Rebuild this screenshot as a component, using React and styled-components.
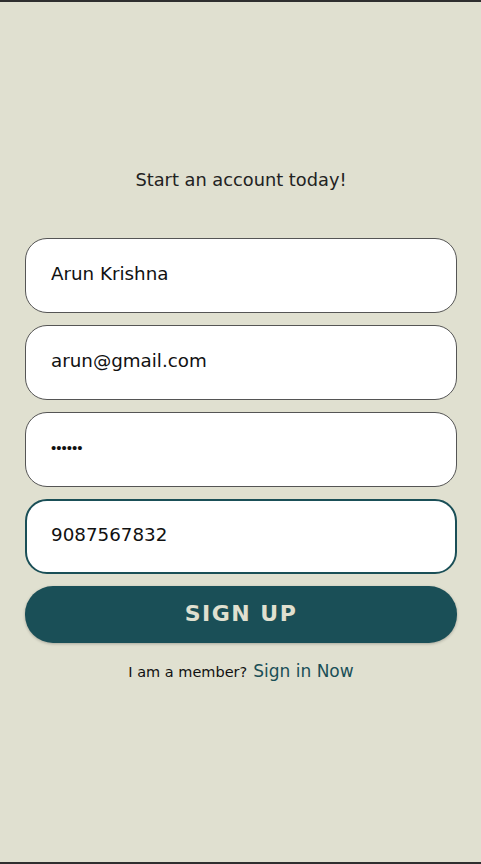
import React, { useState } from 'react'
import styled, { createGlobalStyle } from 'styled-components'

const GlobalStyle = createGlobalStyle`
  html, body {
    margin: 0;
    padding: 0;
    background: #e0e0d0;
  }
  * { box-sizing: border-box; }
`

const Page = styled.div`
  height: 864px;
  display: flex;
  flex-direction: column;
  align-items: center;
  background: #e0e0d0;
  border-top: 2px solid #2f2f2f;
  border-bottom: 2px solid #2f2f2f;
  font-family: "DejaVu Sans", "Liberation Sans", sans-serif;
  padding: 0 24px 0 25px;
`

const Title = styled.h2`
  margin: 167px 0 0;
  font-size: 17.8px;
  font-weight: 400;
  color: #222;
`

const Form = styled.form`
  width: 100%;
  display: flex;
  flex-direction: column;
  gap: 12px;
  margin-top: 48px;
`

const Input = styled.input`
  width: 100%;
  height: 75px;
  border-radius: 22px;
  border: ${({ $focused }) => ($focused ? '2px solid #1a4f57' : '1px solid #555')};
  background: #fff;
  padding: 0 ${({ $focused }) => ($focused ? '24px' : '25px')} 4px;
  font-family: ${({ type }) => (type === 'password' ? '"Liberation Sans", sans-serif' : '"DejaVu Sans", "Liberation Sans", sans-serif')};
  font-size: ${({ type }) => (type === 'password' ? '15px' : '18.3px')};
  color: #111;
  outline: none;
  caret-color: #1a4f57;
`

const Button = styled.button`
  height: 57px;
  border: none;
  border-radius: 28px;
  background: #1a4f57;
  color: #e0e0d0;
  font-family: "DejaVu Sans", "Liberation Sans", sans-serif;
  font-size: 22px;
  font-weight: 700;
  letter-spacing: 1.5px;
  padding-bottom: 4px;
  box-shadow: 0 1px 3px rgba(0, 0, 0, 0.25);
  cursor: pointer;
`

const More = styled.p`
  margin: 18px 0 0;
  font-size: 14.5px;
  color: #111;
  display: flex;
  align-items: baseline;
  gap: 6px;
`

const SignLink = styled.a`
  font-size: 17px;
  color: #1a4f57;
  text-decoration: none;
  cursor: pointer;
`

const App = () => {
  const [name, setName] = useState('Arun Krishna')
  const [email, setEmail] = useState('arun@gmail.com')
  const [password, setPassword] = useState('123456')
  const [phone, setPhone] = useState('9087567832')

  return (
    <>
      <GlobalStyle />
      <Page>
        <Title>Start an account today!</Title>
        <Form onSubmit={e => e.preventDefault()}>
          <Input placeholder="Name" value={name} onChange={e => setName(e.target.value)} />
          <Input placeholder="Email" value={email} onChange={e => setEmail(e.target.value)} />
          <Input type="password" placeholder="Password" value={password} onChange={e => setPassword(e.target.value)} />
          <Input $focused autoFocus placeholder="Phone" value={phone} onChange={e => setPhone(e.target.value)} />
          <Button type="submit">SIGN UP</Button>
        </Form>
        <More>
          I am a member?
          <SignLink>Sign in Now</SignLink>
        </More>
      </Page>
    </>
  )
}

export default App
